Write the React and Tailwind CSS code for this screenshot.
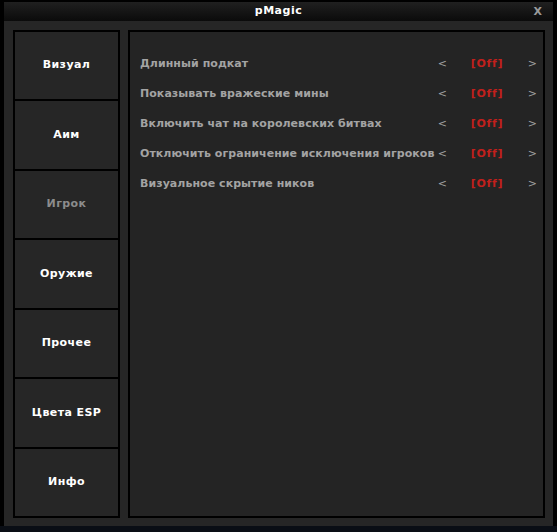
import React from 'react';

const tabs = [
  { name: 'Визуал' },
  { name: 'Аим' },
  { name: 'Игрок', active: true },
  { name: 'Оружие' },
  { name: 'Прочее' },
  { name: 'Цвета ESP' },
  { name: 'Инфо' },
];

const options = [
  'Длинный подкат',
  'Показывать вражеские мины',
  'Включить чат на королевских битвах',
  'Отключить ограничение исключения игроков',
  'Визуальное скрытие ников',
];

export default function App() {
  return (
    <div
      className="w-[557px] h-[532px] bg-black flex flex-col overflow-hidden"
      style={{ fontFamily: '"DejaVu Sans", Verdana, sans-serif' }}
    >
      <div className="ml-[4px] w-[549px] mt-[2px] flex flex-col">
        {/* title bar */}
        <div className="h-[19px] bg-gradient-to-b from-[#202020] to-[#0b0b0b] flex items-center relative">
          <span className="flex-1 text-center text-white text-[11px] font-bold tracking-[0.5px]">pMagic</span>
          <span className="absolute right-[11px] top-[2px] text-[#9a9a9a] text-[11px] font-bold">X</span>
        </div>

        {/* body */}
        <div className="h-[505px] bg-[#262626] flex gap-[8px] pl-[9px] pr-[8px] pt-[9px] pb-[8px]">
          <div className="w-[107px] shrink-0 flex flex-col border-2 border-black">
            {tabs.map((t, i) => (
              <div
                key={t.name}
                className={`flex-1 flex items-center justify-center text-[11px] font-bold tracking-[0.4px] ${
                  i > 0 ? 'border-t-2 border-black' : ''
                } ${t.active ? 'text-[#8c8c8c]' : 'text-white'}`}
              >
                {t.name}
              </div>
            ))}
          </div>

          <div className="flex-1 min-w-0 border-2 border-black bg-[#242424] pt-[17px] pl-[10px] pr-[6px]">
            {options.map((o) => (
              <div key={o} className="h-[30px] flex items-center text-[11px] font-bold">
                <span className="flex-1 min-w-0 whitespace-nowrap text-[#a3a3a3] tracking-[0.05px]">{o}</span>
                <span className="w-[33px] text-[#a0a0a0] font-normal">&lt;</span>
                <span className="w-[57px] text-[#c2201c] tracking-[0.7px]">[Off]</span>
                <span className="text-[#a0a0a0] font-normal">&gt;</span>
              </div>
            ))}
          </div>
        </div>
      </div>
      <div className="flex-1 bg-[#0a0e15]" />
    </div>
  );
}
